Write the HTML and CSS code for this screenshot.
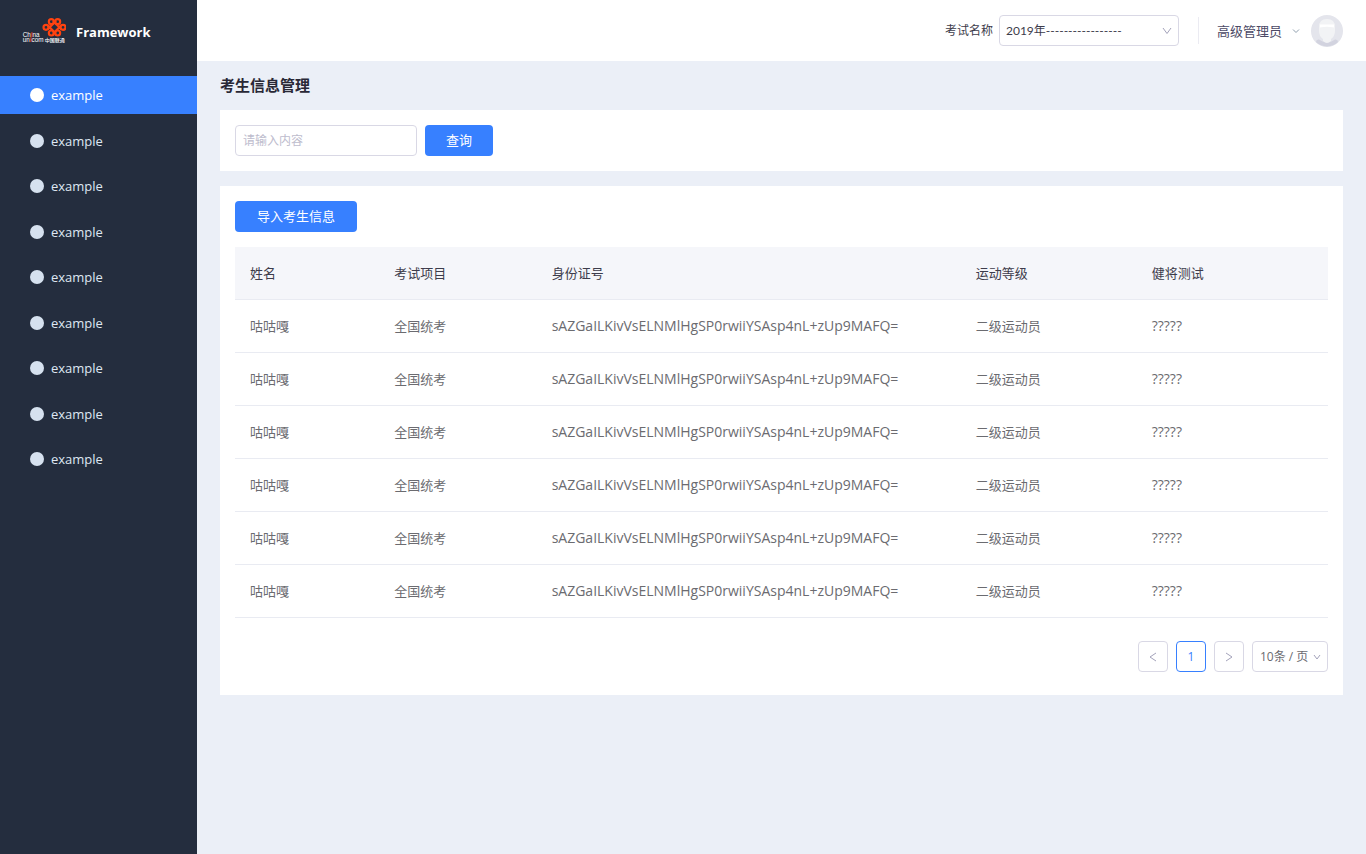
FILE: index.html
```
<!DOCTYPE html>
<html lang="zh-CN">
<head>
<meta charset="utf-8">
<meta name="viewport" content="width=device-width, initial-scale=1">
<title>考生信息管理</title>
<link rel="stylesheet" href="styles.css">
</head>
<body>
<div class="app">
  <aside class="sidebar">
    <div class="brand">
      <svg class="brand-logo" viewBox="0 0 132 75" role="img" aria-label="China unicom 中国联通">
        <g fill="none" stroke="#ff4310" stroke-width="6.5">
          <circle cx="88" cy="11" r="7.5"/>
          <circle cx="107" cy="11" r="7.5"/>
          <circle cx="72" cy="28" r="7.5"/>
          <circle cx="123" cy="28" r="7.5"/>
          <circle cx="88" cy="45" r="7.5"/>
          <circle cx="107" cy="45" r="7.5"/>
          <path d="M77 34 102 9M77 22 102 47M118 22 93 47M118 34 93 9"/>
        </g>
        <g class="logo-text" fill="#fff">
          <text x="2" y="57" font-size="19">Ch<tspan class="logo-accent" fill="#ff4310">i</tspan>na</text>
          <text x="2" y="71" font-size="19">un<tspan class="logo-accent" fill="#ff4310">i</tspan>com</text>
          <text x="68" y="71" font-size="15">中国联通</text>
        </g>
      </svg>
      <span class="brand-name">Framework</span>
    </div>
    <nav class="menu">
      <a class="menu-item active" href="#"><span class="dot"></span>example</a>
      <a class="menu-item" href="#"><span class="dot"></span>example</a>
      <a class="menu-item" href="#"><span class="dot"></span>example</a>
      <a class="menu-item" href="#"><span class="dot"></span>example</a>
      <a class="menu-item" href="#"><span class="dot"></span>example</a>
      <a class="menu-item" href="#"><span class="dot"></span>example</a>
      <a class="menu-item" href="#"><span class="dot"></span>example</a>
      <a class="menu-item" href="#"><span class="dot"></span>example</a>
      <a class="menu-item" href="#"><span class="dot"></span>example</a>
    </nav>
  </aside>
  <div class="page">
    <header class="topbar">
      <label class="exam-label" for="exam">考试名称</label>
      <div class="select exam-select">
        <select id="exam"><option>2019年-----------------</option></select>
        <svg class="chevron" viewBox="0 0 10 8"><path d="M1 1 5 6.500 9 1"/></svg>
      </div>
      <button class="user" type="button">
        <span>高级管理员</span>
        <svg class="chevron-small" viewBox="0 0 8 6"><path d="M1 1.500 4 4.500 7 1.500"/></svg>
        <svg class="avatar" viewBox="0 0 32 32">
          <circle cx="16" cy="16" r="16" fill="#e4e5ec"/>
          <path d="M5 27q0-3 3-2.500 3 2.500 8 2.500t8-2.500q3-.5 3 2.500a16 16 0 0 1-22 0z" fill="#d2d3df"/>
          <path d="M8 12q0-8 8-8t8 8v4q0 5-4 8v2q-4 4-8 0v-2q-4-3-4-8z" fill="#f2f3f5"/>
          <path d="M9 9.500h14v3q-7-1.500-14 0z" fill="#fff"/>
        </svg>
      </button>
    </header>
    <main class="content">
      <h1 class="title">考生信息管理</h1>
      <form class="panel search">
        <input class="field" type="text" placeholder="请输入内容" aria-label="请输入内容">
        <button class="btn" type="button">查询</button>
      </form>
      <section class="panel results">
        <button class="btn btn-wide" type="button">导入考生信息</button>
        <table class="table">
          <colgroup><col class="c-name"><col class="c-exam"><col class="c-id"><col class="c-level"><col class="c-test"></colgroup>
          <thead>
            <tr><th>姓名</th><th>考试项目</th><th>身份证号</th><th>运动等级</th><th>健将测试</th></tr>
          </thead>
          <tbody>
            <tr><td>咕咕嘎</td><td>全国统考</td><td class="code">sAZGaILKivVsELNMlHgSP0rwiiYSAsp4nL+zUp9MAFQ=</td><td>二级运动员</td><td class="code">?????</td></tr>
            <tr><td>咕咕嘎</td><td>全国统考</td><td class="code">sAZGaILKivVsELNMlHgSP0rwiiYSAsp4nL+zUp9MAFQ=</td><td>二级运动员</td><td class="code">?????</td></tr>
            <tr><td>咕咕嘎</td><td>全国统考</td><td class="code">sAZGaILKivVsELNMlHgSP0rwiiYSAsp4nL+zUp9MAFQ=</td><td>二级运动员</td><td class="code">?????</td></tr>
            <tr><td>咕咕嘎</td><td>全国统考</td><td class="code">sAZGaILKivVsELNMlHgSP0rwiiYSAsp4nL+zUp9MAFQ=</td><td>二级运动员</td><td class="code">?????</td></tr>
            <tr><td>咕咕嘎</td><td>全国统考</td><td class="code">sAZGaILKivVsELNMlHgSP0rwiiYSAsp4nL+zUp9MAFQ=</td><td>二级运动员</td><td class="code">?????</td></tr>
            <tr><td>咕咕嘎</td><td>全国统考</td><td class="code">sAZGaILKivVsELNMlHgSP0rwiiYSAsp4nL+zUp9MAFQ=</td><td>二级运动员</td><td class="code">?????</td></tr>
          </tbody>
        </table>
        <div class="pager">
          <button class="page-btn" type="button" aria-label="上一页"><svg viewBox="0 0 8 10"><path d="M7 1 1 5 7 9"/></svg></button>
          <button class="page-btn current" type="button">1</button>
          <button class="page-btn" type="button" aria-label="下一页"><svg viewBox="0 0 8 10"><path d="M1 1 7 5 1 9"/></svg></button>
          <div class="select size-select">
            <select aria-label="每页条数"><option>10条 / 页</option></select>
            <svg class="chevron-small" viewBox="0 0 8 6"><path d="M1 1 4 5 7 1"/></svg>
          </div>
        </div>
      </section>
    </main>
  </div>
</div>
</body>
</html>
```

FILE: styles.css
```
* { box-sizing: border-box; }

body {
  margin: 0;
  background: #ebeff7;
  color: #6b6b70;
  font: 13px/20px "Open Sans", "Noto Sans CJK SC", sans-serif;
}

button, input, select { font: inherit; color: inherit; }
button { cursor: pointer; }

.app { display: flex; min-height: 100vh; }

.sidebar { flex: 0 0 197px; background: #242d3e; }

.brand {
  display: flex;
  align-items: center;
  gap: 10px;
  height: 60px;
  margin-bottom: 16px;
  padding-left: 22px;
}
.brand-logo { width: 44px; height: 25px; }
.logo-text { font-family: "Liberation Sans", "Noto Sans CJK SC", sans-serif; font-weight: 500; }
.logo-accent { font-weight: 700; }
.brand-name { padding-top: 4px; color: #fff; font-size: 13px; font-weight: 700; }

.menu {
  display: flex;
  flex-direction: column;
  justify-content: space-between;
  height: 402px;
}
.menu-item {
  display: flex;
  align-items: center;
  gap: 7px;
  height: 38px;
  padding-left: 30px;
  color: #dfe7f2;
  text-decoration: none;
}
.dot { width: 14px; height: 14px; border-radius: 50%; background: #d6e1ef; }
.active { background: #3780ff; color: #fff; }
.active .dot { background: #fff; }

.page { flex: 1; min-width: 0; }

.topbar {
  display: flex;
  align-items: center;
  justify-content: flex-end;
  height: 61px;
  padding: 0 23px;
  background: #fff;
}
.exam-label { margin-right: 6px; color: #3d3c4b; font-size: 12px; }

.select { position: relative; }
.select select {
  appearance: none;
  width: 100%;
  height: 31px;
  padding: 0 7px;
  border: 1px solid #d9d8e5;
  border-radius: 4px;
  background: #fff;
  font-size: 12px;
}
.select svg { position: absolute; top: 0; bottom: 0; right: 7px; margin: auto 0; pointer-events: none; }
.exam-select { width: 180px; margin-right: 19px; color: #3d3c4b; }
.exam-select select { padding: 0 6px; font-family: Lato, "Noto Sans CJK SC", sans-serif; }
.chevron { width: 10px; height: 8px; }
.chevron-small { width: 8px; height: 6px; }
.chevron, .chevron-small, .page-btn svg { fill: none; stroke: #a3a2ba; stroke-width: 1; }

.user {
  display: flex;
  align-items: center;
  padding: 0;
  border: 0;
  background: none;
  color: #4c4a66;
}
.user::before { content: ""; width: 1px; height: 27px; margin-right: 18px; background: #ebebf2; }
.user .chevron-small { margin: 0 11px 0 10px; stroke: #8f9fae; }
.avatar { width: 32px; height: 32px; }

.content { padding: 14px 23px; }
.title { margin: 0 0 15px; color: #292836; font-size: 15px; line-height: 20px; font-weight: 700; }

.panel { padding: 15px; background: #fff; }
.search { display: flex; gap: 8px; margin-bottom: 15px; }
.field {
  width: 182px;
  height: 31px;
  padding: 0 7px;
  border: 1px solid #d9d8e5;
  border-radius: 4px;
  background: #fff;
  font-size: 12px;
}
.field::placeholder { color: #bdbccd; opacity: 1; }

.btn {
  height: 31px;
  padding: 0 21px 2px;
  border: 0;
  border-radius: 4px;
  background: #3780ff;
  color: #fff;
}
.btn-wide { padding: 0 22px 2px; }

.results { padding-bottom: 23px; }
.table {
  width: 100%;
  margin: 15px 0 23px;
  border-collapse: separate;
  border-spacing: 0;
  table-layout: fixed;
}
.c-name { width: 13.2%; }
.c-exam { width: 14.4%; }
.c-id { width: 38.8%; }
.c-level { width: 16.1%; }
.c-test { width: 17.5%; }
.table th, .table td {
  height: 53px;
  padding: 0 15px;
  border-bottom: 1px solid #e9ebf2;
  text-align: left;
  font-weight: 400;
}
.table th { background: #f5f6fa; color: #3d3c4b; }
.table .code { font-size: 14px; }

.pager { display: flex; justify-content: flex-end; gap: 8px; }
.page-btn {
  display: grid;
  place-items: center;
  width: 30px;
  height: 31px;
  padding: 0;
  border: 1px solid #d9d8e5;
  border-radius: 4px;
  background: #fff;
  font-size: 12px;
}
.page-btn svg { width: 8px; height: 10px; }
.page-btn.current { border-color: #3780ff; color: #3780ff; }
.size-select { width: 76px; }
```
